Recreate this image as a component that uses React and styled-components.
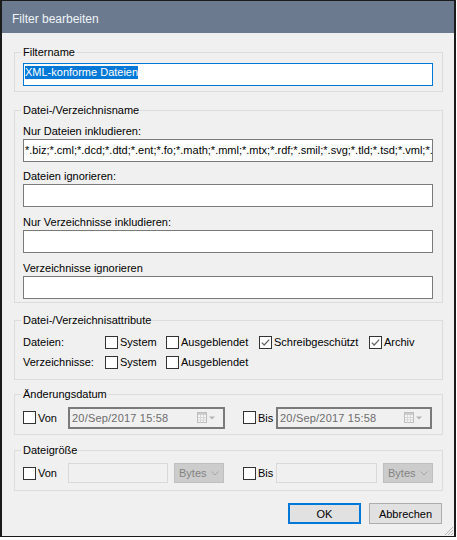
import styled, { createGlobalStyle } from "styled-components";

const GlobalStyle = createGlobalStyle`
  html, body {
    margin: 0;
    padding: 0;
    background: #ffffff;
  }
  body {
    font-family: "Liberation Sans", Arial, sans-serif;
    font-size: 11px;
    color: #000;
  }
`;

const pathFields = [
  {
    label: "Nur Dateien inkludieren:",
    value:
      "*.biz;*.cml;*.dcd;*.dtd;*.ent;*.fo;*.math;*.mml;*.mtx;*.rdf;*.smil;*.svg;*.tld;*.tsd;*.vml;*.vxml;*.wml;*.xbrl",
  },
  { label: "Dateien ignorieren:", value: "" },
  { label: "Nur Verzeichnisse inkludieren:", value: "" },
  { label: "Verzeichnisse ignorieren", value: "" },
];

function CheckMark() {
  return (
    <svg width="11" height="11" viewBox="0 0 11 11">
      <polyline points="1.8,5.6 4.2,8 9.2,2.6" fill="none" stroke="#666" strokeWidth="1.3" />
    </svg>
  );
}

function Check({ checked }) {
  return <CheckBox>{checked && <CheckMark />}</CheckBox>;
}

function CalendarIcon() {
  return (
    <svg width="20" height="12" viewBox="0 0 20 12">
      <rect x="0.5" y="0.5" width="9" height="10" fill="#f6f6f6" stroke="#bdbdbd" />
      <rect x="1" y="1" width="8" height="2" fill="#cdcdcd" />
      <path d="M1 5.5h8M1 8h8M3.5 3v7.5M6.5 3v7.5" stroke="#d6d6d6" />
      <path d="M12 4.5h6l-3 3z" fill="#b3b3b3" />
    </svg>
  );
}

function Chevron() {
  return (
    <svg width="8" height="5" viewBox="0 0 8 5">
      <polyline points="0.5,0.5 4,4 7.5,0.5" fill="none" stroke="#a5a5a5" strokeWidth="1" />
    </svg>
  );
}

export default function App() {
  return (
    <>
      <GlobalStyle />
      <Window>
        <TitleBar>Filter bearbeiten</TitleBar>
        <Body>
          <Group $pt={4} $pb={5}>
            <Legend>Filtername</Legend>
            <TextBox $focused>
              <Selection>XML-konforme Dateien</Selection>
            </TextBox>
          </Group>

          <Group $mt={11.5} $pt={8} $pb={3}>
            <Legend>Datei-/Verzeichnisname</Legend>
            {pathFields.map((f, i) => (
              <div key={f.label}>
                <FieldLabel $first={i === 0}>{f.label}</FieldLabel>
                <TextBox>{f.value}</TextBox>
              </div>
            ))}
          </Group>

          <Group $mt={11.5} $pt={5} $pb={6.5}>
            <Legend>Datei-/Verzeichnisattribute</Legend>
            <AttrGrid>
              <span>Dateien:</span>
              <CheckItem><Check />System</CheckItem>
              <CheckItem><Check />Ausgeblendet</CheckItem>
              <CheckItem><Check checked />Schreibgeschützt</CheckItem>
              <CheckItem><Check checked />Archiv</CheckItem>
              <span>Verzeichnisse:</span>
              <CheckItem><Check />System</CheckItem>
              <CheckItem><Check />Ausgeblendet</CheckItem>
            </AttrGrid>
          </Group>

          <Group $mt={8} $pt={6} $pb={5}>
            <Legend>Änderungsdatum</Legend>
            <Row>
              <Half $w={220}>
                <CheckItem $w={45}><Check />Von</CheckItem>
                <DateBox $w={157}>
                  <DateText>20/Sep/2017 15:58</DateText>
                  <CalendarIcon />
                </DateBox>
              </Half>
              <Half>
                <CheckItem $w={33}><Check />Bis</CheckItem>
                <DateBox $w={156}>
                  <DateText>20/Sep/2017 15:58</DateText>
                  <CalendarIcon />
                </DateBox>
              </Half>
            </Row>
          </Group>

          <Group $mt={9.5} $pt={6} $pb={7}>
            <Legend>Dateigröße</Legend>
            <Row>
              <Half $w={220}>
                <CheckItem $w={45}><Check />Von</CheckItem>
                <SizeBox $w={100} />
                <Combo>
                  <span>Bytes</span>
                  <Chevron />
                </Combo>
              </Half>
              <Half>
                <CheckItem $w={33}><Check />Bis</CheckItem>
                <SizeBox $w={101} />
                <Combo>
                  <span>Bytes</span>
                  <Chevron />
                </Combo>
              </Half>
            </Row>
          </Group>

          <ButtonRow>
            <Button $default>OK</Button>
            <Button>Abbrechen</Button>
          </ButtonRow>
        </Body>
        <Grip width="12" height="12" viewBox="0 0 12 12">
          <path d="M11 3L3 11M11 6L6 11M11 9L9 11" stroke="#b9b9b9" strokeWidth="1" />
        </Grip>
      </Window>
    </>
  );
}

const Window = styled.div`
  position: relative;
  width: 456px;
  height: 537px;
  box-sizing: border-box;
  border: 1px solid #1b1b1b;
  border-left-width: 2px;
  border-right-width: 2px;
  background: #f0f0f0;
  display: flex;
  flex-direction: column;
`;

const TitleBar = styled.div`
  height: 32px;
  box-sizing: border-box;
  flex-shrink: 0;
  padding: 4px 0 0 10px;
  display: flex;
  align-items: center;
  background: #6b7a8e;
  color: #eef4f8;
  font-size: 12px;
  line-height: 14px;
`;

const Body = styled.div`
  padding: 13px 11px 0 12px;
  display: flex;
  flex-direction: column;
`;

const Group = styled.fieldset`
  margin: ${(p) => p.$mt || 0}px 0 0;
  padding: ${(p) => p.$pt}px 9px ${(p) => p.$pb}px 8px;
  border: 1px solid #dcdcdc;
  min-width: 0;
`;

const Legend = styled.legend`
  margin-left: -2px;
  padding: 0 1px 0 2px;
  font-size: 11px;
  line-height: 13px;
`;

const TextBox = styled.div`
  height: 23px;
  box-sizing: border-box;
  border: 1px solid ${(p) => (p.$focused ? "#0078d7" : "#7a7a7a")};
  background: #fff;
  padding: ${(p) => (p.$focused ? "2px 1px 0" : "0 1px")};
  display: flex;
  align-items: ${(p) => (p.$focused ? "flex-start" : "center")};
  white-space: nowrap;
  overflow: hidden;
  line-height: 13px;
`;

const Selection = styled.span`
  background: #0078d7;
  color: #fff;
`;

const FieldLabel = styled.div`
  height: 13px;
  line-height: 13px;
  margin-top: ${(p) => (p.$first ? 0 : 8.7)}px;
  margin-bottom: 1px;
`;

const AttrGrid = styled.div`
  display: grid;
  grid-template-columns: 82px 61px 93px 110px auto;
  grid-auto-rows: 20px;
  align-items: center;
`;

const CheckItem = styled.label`
  display: flex;
  align-items: center;
  gap: 2px;
  flex-shrink: 0;
  width: ${(p) => (p.$w ? `${p.$w}px` : "auto")};
  white-space: nowrap;
`;

const CheckBox = styled.span`
  width: 13px;
  height: 13px;
  box-sizing: border-box;
  border: 1px solid #333;
  background: #fff;
  display: flex;
  align-items: center;
  justify-content: center;
  flex-shrink: 0;
`;

const Row = styled.div`
  display: flex;
  align-items: center;
`;

const Half = styled.div`
  display: flex;
  align-items: center;
  width: ${(p) => (p.$w ? `${p.$w}px` : "auto")};
  flex-shrink: 0;
`;

const DateBox = styled.div`
  width: ${(p) => p.$w}px;
  height: 22px;
  box-sizing: border-box;
  border: 2px solid #7a7a7a;
  background: #f0f0f0;
  display: flex;
  align-items: center;
  padding: 0 6px 0 2px;
`;

const DateText = styled.span`
  flex: 1;
  color: #6d6d6d;
  letter-spacing: 0.2px;
`;

const SizeBox = styled.div`
  width: ${(p) => p.$w}px;
  height: 20px;
  box-sizing: border-box;
  border: 1px solid #d9d9d9;
  background: #f0f0f0;
`;

const Combo = styled.div`
  width: 50px;
  height: 20px;
  margin-left: 6px;
  box-sizing: border-box;
  border: 1px solid #bfbfbf;
  background: #cccccc;
  color: #838383;
  display: flex;
  align-items: center;
  justify-content: space-between;
  padding: 0 4px 0 4px;
`;

const ButtonRow = styled.div`
  display: flex;
  justify-content: flex-end;
  gap: 8px;
  margin-top: 12px;
  padding-right: 1px;
`;

const Button = styled.div`
  width: 73px;
  height: 21px;
  box-sizing: border-box;
  border: ${(p) => (p.$default ? "2px solid #0078d7" : "1px solid #adadad")};
  background: #e1e1e1;
  display: flex;
  align-items: center;
  justify-content: center;
`;

const Grip = styled.svg`
  position: absolute;
  right: 0;
  bottom: 0;
`;
